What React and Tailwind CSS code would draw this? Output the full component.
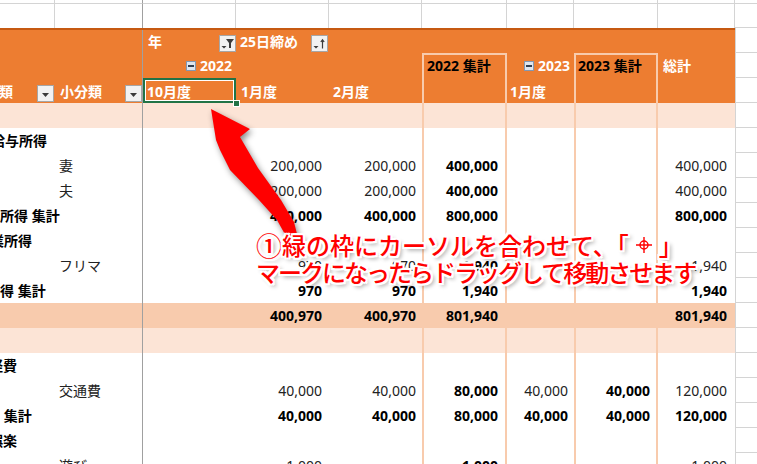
import React from 'react'

const FONT = "font-['Noto_Sans','Noto_Sans_CJK_JP',sans-serif]"

// 上の白い行のセル幅
const COLS = ['w-[55px]', 'w-[88px]', 'w-[93px]', 'w-[93px]', 'w-[93px]', 'w-[85px]', 'w-[67px]', 'w-[84px]', 'w-[77px]']

// 値の列 (10月度 〜 総計)
const VCOLS = [
  'w-[93px] pr-[7px]',
  'w-[93px] pr-[7px]',
  'w-[93px] pr-[6px]',
  'w-[85px] pr-[7px] border-x-2 border-[#f8cbad]',
  'w-[67px] pr-[6px]',
  'w-[84px] pr-[6px] border-x-2 border-[#f8cbad]',
  'w-[77px] pr-[8px]',
]

const rows = [
  { kind: 'group', label: '給与所得', ml: '-ml-[9px]' },
  { kind: 'item', label: '妻', v: ['', '200,000', '200,000', '400,000', '', '', '400,000'] },
  { kind: 'item', label: '夫', v: ['', '200,000', '200,000', '400,000', '', '', '400,000'] },
  { kind: 'sum', label: '給与所得 集計', ml: '-ml-[28px]', v: ['', '400,000', '400,000', '800,000', '', '', '800,000'] },
  { kind: 'group', label: '事業所得', ml: '-ml-[24px]' },
  { kind: 'item', label: 'フリマ', v: ['', '970', '970', '1,940', '', '', '1,940'] },
  { kind: 'sum', label: '事業所得 集計', ml: '-ml-[42px]', v: ['', '970', '970', '1,940', '', '', '1,940'] },
  { kind: 'total', v: ['', '400,970', '400,970', '801,940', '', '', '801,940'] },
  { kind: 'blank' },
  { kind: 'group', label: '必要経費', ml: '-ml-[39px]' },
  { kind: 'item', label: '交通費', v: ['', '40,000', '40,000', '80,000', '40,000', '40,000', '120,000'] },
  { kind: 'sum', label: '必要経費 集計', ml: '-ml-[56px]', v: ['', '40,000', '40,000', '80,000', '40,000', '40,000', '120,000'] },
  { kind: 'group', label: '娯楽', ml: '-ml-[11px]' },
  { kind: 'item', label: '遊び', v: ['', '1,000', '', '1,000', '', '', '1,000'] },
]

function DropBtn() {
  return (
    <span className="flex h-[17px] w-[17px] shrink-0 items-center justify-center border border-[#a6a6a6] bg-[#f2f2f2] pt-[2px]">
      <svg width="7" height="4" viewBox="0 0 7 4">
        <path d="M0 0h7L3.5 4z" fill="#3c3c3c" />
      </svg>
    </span>
  )
}

function FilterBtn() {
  return (
    <span className="flex h-[17px] w-[17px] shrink-0 items-center justify-center border border-[#a6a6a6] bg-[#f2f2f2]">
      <svg width="15" height="15" viewBox="0 0 15 15">
        <path d="M6 3h8l-3 4v5H9V7z" fill="#3c3c3c" />
        <path d="M1.5 10h5L4 12.5z" fill="#3c3c3c" />
      </svg>
    </span>
  )
}

function SortBtn() {
  return (
    <span className="flex h-[17px] w-[17px] shrink-0 items-center justify-center border border-[#a6a6a6] bg-[#f2f2f2]">
      <svg width="15" height="15" viewBox="0 0 15 15">
        <path d="M1.5 10h5L4 12.5z" fill="#3c3c3c" />
        <path d="M10.5 4v8.5M8.8 6l1.7-2.2L12.2 6" stroke="#3c3c3c" strokeWidth="1.2" fill="none" />
      </svg>
    </span>
  )
}

function MinusBox() {
  return (
    <span className="flex h-[10px] w-[10px] shrink-0 items-center justify-center border border-[#8497b0] bg-[#dfe5ee]">
      <span className="h-[2px] w-[6px] bg-[#333f50]" />
    </span>
  )
}

function MoveIcon() {
  return (
    <svg width="18" height="18" viewBox="0 0 18 18" className="mx-[6px]">
      <g stroke="#fff" strokeWidth="3.5" fill="none">
        <path d="M9 1v16M1 9h16" />
        <circle cx="9" cy="9" r="4" />
      </g>
      <g stroke="#ff0000" strokeWidth="1.4" fill="none">
        <path d="M9 1v16M1 9h16" />
        <circle cx="9" cy="9" r="4" />
      </g>
    </svg>
  )
}

function GridRow({ h, bottom }) {
  return (
    <div className={`flex ${h}`}>
      {COLS.map((w, i) => (
        <div
          key={i}
          className={`${w} shrink-0 border-r ${i === 1 ? 'border-[#a0a0a0]' : 'border-[#d4d4d4]'} ${bottom ? 'border-b border-b-[#d4d4d4]' : ''}`}
        />
      ))}
      <div className="flex-1 border-b border-[#d4d4d4]" />
    </div>
  )
}

function ValueCells({ v = [], boldAll }) {
  return VCOLS.map((w, i) => (
    <div key={i} className={`flex shrink-0 items-end justify-end pb-[2px] ${w}`}>
      {v[i] && (
        <span className={`leading-5 ${boldAll || i === 3 || i === 5 ? 'font-bold' : 'font-normal text-[#222]'}`}>{v[i]}</span>
      )}
    </div>
  ))
}

function DataRow({ row }) {
  if (row.kind === 'blank') {
    return (
      <div className="flex h-[25px] bg-[#fce4d6]">
        <div className="w-[143px] shrink-0 border-r border-[#a0a0a0]" />
        <ValueCells />
      </div>
    )
  }
  if (row.kind === 'total') {
    return (
      <div className="flex h-[25px] bg-[#f8cbad]">
        <div className="w-[143px] shrink-0 border-r border-[#a0a0a0]" />
        <ValueCells v={row.v} boldAll />
      </div>
    )
  }
  const isItem = row.kind === 'item'
  return (
    <div className="flex h-[25px] bg-white">
      <div className="flex w-[143px] shrink-0 items-end overflow-hidden border-r border-[#a0a0a0] pb-[2px]">
        {isItem ? (
          <span className="whitespace-nowrap pl-[59px] leading-5 text-[#222]">{row.label}</span>
        ) : (
          <span className={`whitespace-nowrap font-bold leading-5 ${row.ml}`}>{row.label}</span>
        )}
      </div>
      <ValueCells v={row.v} boldAll={row.kind === 'sum'} />
    </div>
  )
}

export default function App() {
  return (
    <div className={`relative h-[464px] w-[757px] overflow-hidden bg-white text-[14px] text-black ${FONT}`}>
      <GridRow h="h-[4px]" bottom />
      <div className="flex h-[24px]">
        {COLS.map((w, i) => (
          <div key={i} className={`${w} shrink-0 border-r ${i === 1 ? 'border-[#a0a0a0]' : 'border-[#d4d4d4]'}`} />
        ))}
        <div className="flex-1 border-b border-[#d4d4d4]" />
      </div>

      <div className="flex">
        <div className="w-[735px] shrink-0 border-t-2 border-[#c65911]">
          {/* ヘッダー1段目 */}
          <div className="flex h-[23px] bg-[#ed7d31] font-bold text-white">
            <div className="w-[143px] shrink-0 border-r border-[#a0a0a0]" />
            <div className="flex w-[93px] shrink-0 items-end justify-between pb-px pl-[5px]">
              <span className="leading-5">年</span>
              <FilterBtn />
            </div>
            <div className="flex w-[93px] shrink-0 items-end justify-between pb-px pl-[4px] pr-px">
              <span className="leading-5">25日締め</span>
              <SortBtn />
            </div>
          </div>

          {/* ヘッダー2段目 */}
          <div className="flex h-[25px] bg-[#ed7d31] font-bold text-white">
            <div className="w-[143px] shrink-0 border-r border-[#a0a0a0]" />
            <div className="flex w-[93px] shrink-0 items-end justify-end pb-[2px] pr-[4px]">
              <span className="flex items-center gap-[4px] leading-5">
                <MinusBox />
                2022
              </span>
            </div>
            <div className="w-[93px] shrink-0" />
            <div className="w-[93px] shrink-0" />
            <div className="flex w-[85px] shrink-0 items-end border-x-2 border-t-2 border-[#f8cbad] pb-[2px] pl-[3px] text-black">
              <span className="whitespace-nowrap leading-5">2022 集計</span>
            </div>
            <div className="flex w-[67px] shrink-0 items-end justify-end pb-[2px] pr-[4px]">
              <span className="flex items-center gap-[4px] leading-5">
                <MinusBox />
                2023
              </span>
            </div>
            <div className="flex w-[84px] shrink-0 items-end border-x-2 border-t-2 border-[#f8cbad] pb-[2px] pl-[2px] text-black">
              <span className="whitespace-nowrap leading-5">2023 集計</span>
            </div>
            <div className="flex w-[77px] shrink-0 items-end pb-[2px] pl-[5px]">
              <span className="leading-5">総計</span>
            </div>
          </div>

          {/* ヘッダー3段目 */}
          <div className="flex h-[25px] bg-[#ed7d31] font-bold text-white">
            <div className="flex w-[55px] shrink-0 items-end justify-between overflow-hidden pb-px pr-px">
              <span className="-ml-[29px] whitespace-nowrap leading-5">大分類</span>
              <DropBtn />
            </div>
            <div className="flex w-[88px] shrink-0 items-end justify-between border-r border-[#a0a0a0] pb-px pl-[5px]">
              <span className="whitespace-nowrap leading-5">小分類</span>
              <DropBtn />
            </div>
            <div className="relative flex w-[93px] shrink-0 items-end pb-px pl-[4px]">
              <span className="leading-5">10月度</span>
              <div className="absolute inset-0 border-2 border-[#217346] shadow-[inset_0_0_0_1px_#fff]" />
              <div className="absolute -bottom-[4px] -right-[4px] z-10 h-[7px] w-[7px] border border-white bg-[#217346]" />
            </div>
            <div className="flex w-[93px] shrink-0 items-end pb-px pl-[5px]">
              <span className="leading-5">1月度</span>
            </div>
            <div className="flex w-[93px] shrink-0 items-end pb-px pl-[4px]">
              <span className="leading-5">2月度</span>
            </div>
            <div className="w-[85px] shrink-0 border-x-2 border-[#f8cbad]" />
            <div className="flex w-[67px] shrink-0 items-end pb-px pl-[3px]">
              <span className="leading-5">1月度</span>
            </div>
            <div className="w-[84px] shrink-0 border-x-2 border-[#f8cbad]" />
            <div className="w-[77px] shrink-0" />
          </div>

          <DataRow row={{ kind: 'blank' }} />
          {rows.map((row, i) => (
            <DataRow key={i} row={row} />
          ))}
        </div>

        <div className="flex-1">
          {Array.from({ length: 18 }).map((_, i) => (
            <div key={i} className="h-[25px] border-b border-l border-[#d4d4d4]" />
          ))}
        </div>
      </div>

      {/* 赤い矢印 */}
      <svg
        className="pointer-events-none absolute left-0 top-0 drop-shadow-[2px_3px_3px_rgba(0,0,0,0.45)]"
        width="757"
        height="464"
        viewBox="0 0 757 464"
      >
        <polygon
          points="211,109 250,129 240,137 258,168 281,200 294,222 298,238 287,238 277,220 259,200 230,170 220,150 216,140"
          fill="#ff0000"
        />
      </svg>

      {/* 説明文 */}
      <div className="pointer-events-none absolute left-[256px] top-[231px] font-['Noto_Sans_CJK_JP',sans-serif] text-[24px] font-medium leading-[27px] text-[#ff0000] [text-shadow:2px_0_0_#fff,-2px_0_0_#fff,0_2px_0_#fff,0_-2px_0_#fff,2px_2px_0_#fff,-2px_-2px_0_#fff,2px_-2px_0_#fff,-2px_2px_0_#fff,3px_3px_4px_rgba(0,0,0,0.45)]">
        <div className="flex items-center whitespace-nowrap">
          <span className="text-[26px]">①</span>緑の枠にカーソルを合わせて、「
          <MoveIcon />」
        </div>
        <div className="whitespace-nowrap tracking-[-2px]">マークになったらドラッグして移動させます</div>
      </div>
    </div>
  )
}
